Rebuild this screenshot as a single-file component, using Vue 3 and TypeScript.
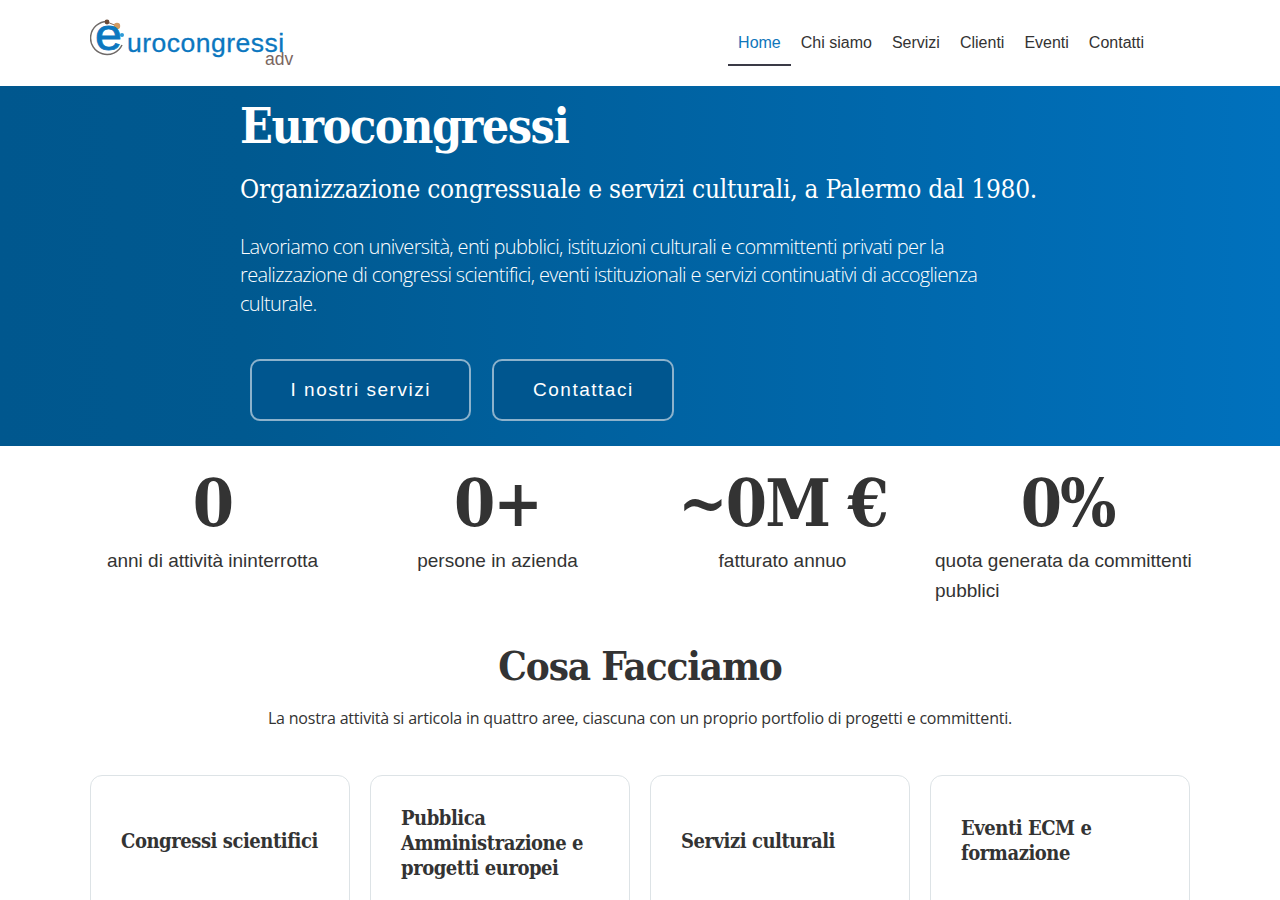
<script setup lang="ts">
const navItems = ["Home", "Chi siamo", "Servizi", "Clienti", "Eventi", "Contatti"];

const stats = [
  { value: "0", label: "anni di attività ininterrotta" },
  { value: "0+", label: "persone in azienda" },
  { value: "~0M €", label: "fatturato annuo" },
  { value: "0%", label: "quota generata da committenti pubblici" },
];

const areas = [
  "Congressi scientifici",
  "Pubblica Amministrazione e progetti europei",
  "Servizi culturali",
  "Eventi ECM e formazione",
];
</script>

<template>
  <header class="site-header">
    <div class="header-inner">
      <a class="logo" href="#">
        <svg width="206" height="52" viewBox="0 0 206 52">
          <path d="M17 4.5 A16.5 16.5 0 1 0 32 28" fill="none" stroke="#6f6a68" stroke-width="1.5" />
          <path d="M17 5 L27 9" stroke="#8a6a55" stroke-width="1" />
          <circle cx="17" cy="5" r="2.4" fill="#6b4a38" />
          <circle cx="27" cy="9" r="3.2" fill="#d19a62" />
          <circle cx="32" cy="18" r="2" fill="#2f9ad6" />
          <text class="logo-e" transform="translate(5 33) scale(1.1 1)">e</text>
          <text class="logo-word" x="37" y="34.5">urocongressi</text>
          <text class="logo-adv" x="175" y="48">adv</text>
        </svg>
      </a>
      <nav class="main-nav">
        <a
          v-for="(item, index) in navItems"
          :key="item"
          :class="['nav-link', { active: index === 0 }]"
          href="#"
        >{{ item }}</a>
      </nav>
    </div>
  </header>

  <section class="hero">
    <div class="hero-inner">
      <h1>Eurocongressi</h1>
      <h2>Organizzazione congressuale e servizi culturali, a Palermo dal 1980.</h2>
      <p>
        Lavoriamo con università, enti pubblici, istituzioni culturali e committenti privati per la
        realizzazione di congressi scientifici, eventi istituzionali e servizi continuativi di
        accoglienza culturale.
      </p>
      <div class="hero-actions">
        <a class="btn" href="#">I nostri servizi</a>
        <a class="btn" href="#">Contattaci</a>
      </div>
    </div>
  </section>

  <section class="stats">
    <div v-for="stat in stats" :key="stat.label" class="stat">
      <div class="stat-value">{{ stat.value }}</div>
      <div class="stat-label">{{ stat.label }}</div>
    </div>
  </section>

  <section class="services">
    <h2 class="section-title">Cosa Facciamo</h2>
    <p class="section-lead">
      La nostra attività si articola in quattro aree, ciascuna con un proprio portfolio di progetti e committenti.
    </p>
    <div class="cards">
      <article v-for="area in areas" :key="area" class="card">
        <h3>{{ area }}</h3>
      </article>
    </div>
  </section>
</template>

<style>
html,
body {
  margin: 0;
  background: #fff;
  overflow: hidden;
}
</style>

<style scoped>
.site-header {
  height: 86px;
  background: #fff;
}
.header-inner {
  width: 1100px;
  height: 86px;
  margin: 0 auto;
  display: flex;
  justify-content: space-between;
  align-items: flex-start;
}
.logo {
  display: block;
  margin-top: 17px;
  height: 52px;
}
.logo svg {
  display: block;
}
.logo-e {
  font: 400 44px "Liberation Sans", sans-serif;
  fill: #0b77c0;
  stroke: #0b77c0;
  stroke-width: 0.8px;
}
.logo-word {
  font: 400 26.5px "Liberation Sans", sans-serif;
  letter-spacing: 0.5px;
  fill: #0b77c0;
  stroke: #0b77c0;
  stroke-width: 0.3px;
}
.logo-adv {
  font: 400 17.5px "Liberation Sans", sans-serif;
  fill: #7a6660;
}
.main-nav {
  display: flex;
  margin-right: 36px;
  margin-top: 20px;
}
.nav-link {
  padding: 1px 10px 0;
  height: 43px;
  font: 400 16px/44px "Liberation Sans", sans-serif;
  color: #333;
  text-decoration: none;
  border-bottom: 2px solid transparent;
}
.nav-link.active {
  color: #0f76bb;
  border-bottom-color: #3a3a46;
}

.hero {
  height: 360px;
  box-sizing: border-box;
  background: linear-gradient(90deg, #00578e 0%, #005990 19%, #0071bd 100%);
  color: #fff;
}
.hero-inner {
  width: 800px;
  margin: 0 auto;
}
.hero h1 {
  margin: 0;
  padding-top: 10px;
  font: 700 48px/60px "DejaVu Serif Condensed", "DejaVu Serif", serif;
  letter-spacing: -1.5px;
}
.hero h2 {
  margin: 15px 0 0;
  font: 400 26px/36px "DejaVu Serif Condensed", "DejaVu Serif", serif;
  letter-spacing: -0.23px;
  white-space: nowrap;
}
.hero p {
  margin: 25.8px 0 0;
  width: 760px;
  font: 300 20px/28.6px "Open Sans", sans-serif;
  letter-spacing: -0.64px;
}
.hero-actions {
  display: flex;
  gap: 21px;
  margin: 40.7px 0 0 10px;
}
.btn {
  box-sizing: border-box;
  height: 62px;
  padding: 0 38.5px;
  border: 2px solid rgba(255, 255, 255, 0.55);
  border-radius: 10px;
  background: #00568f;
  color: #fff;
  font: 400 19px/58px "Liberation Sans", sans-serif;
  letter-spacing: 1.52px;
  text-decoration: none;
}

.stats {
  width: 1140px;
  margin: 0 auto;
  display: grid;
  grid-template-columns: repeat(4, 1fr);
}
.stat {
  box-sizing: border-box;
  padding: 14px 10px 0;
  display: flex;
  flex-direction: column;
  align-items: center;
}
.stat-value {
  font: 700 66px/86px "DejaVu Serif Condensed", "DejaVu Serif", serif;
  letter-spacing: -2px;
  color: #333;
  white-space: nowrap;
}
.stat-label {
  font: 400 19px/30px "Liberation Sans", sans-serif;
  color: #333;
}

.services {
  width: 1100px;
  margin: 0 auto;
}
.section-title {
  margin: 35px 0 0;
  text-align: center;
  font: 700 40px/50px "DejaVu Serif Condensed", "DejaVu Serif", serif;
  letter-spacing: -1.15px;
  color: #333;
}
.section-lead {
  margin: 14px 0 0;
  text-align: center;
  font: 400 16px/26px "Open Sans", sans-serif;
  letter-spacing: -0.2px;
  color: #333;
}
.cards {
  margin-top: 44px;
  display: grid;
  grid-template-columns: repeat(4, 260px);
  gap: 20px;
}
.card {
  box-sizing: border-box;
  height: 220px;
  padding: 30px;
  border: 1px solid #dde3e6;
  border-radius: 12px;
}
.card h3 {
  margin: 0;
  min-height: 70px;
  display: flex;
  align-items: center;
  font: 700 20px/25px "DejaVu Serif Condensed", "DejaVu Serif", serif;
  letter-spacing: -0.45px;
  color: #333;
}
</style>
